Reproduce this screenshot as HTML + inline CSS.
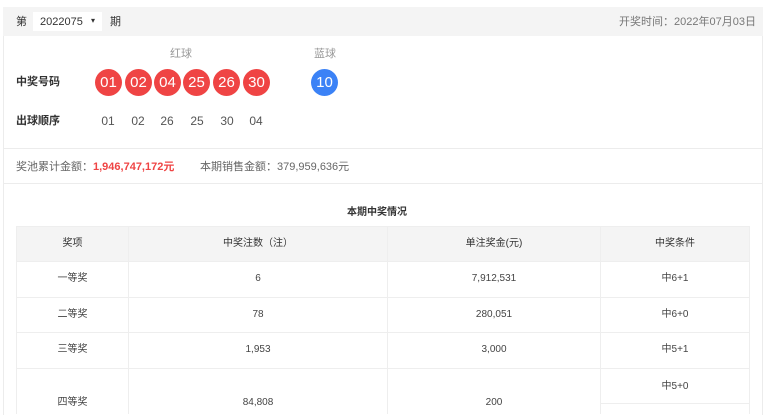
<!DOCTYPE html>
<html><head><meta charset="utf-8"><style>
*{margin:0;padding:0;box-sizing:border-box}
html,body{width:780px;height:415px;overflow:hidden}
body{background:#fff;font-family:"Liberation Sans","Noto Sans CJK SC",sans-serif;font-size:11px;color:#333;position:relative}
.a{position:absolute;white-space:nowrap;line-height:14px}
.card{position:absolute;left:3px;top:7px;width:760px;height:408px;border:1px solid #ececec;border-top:none;border-bottom:none}
.top{position:absolute;left:3px;top:7px;width:760px;height:29px;background:#f4f4f4}
.sel{position:absolute;left:33px;top:12px;width:69px;height:19px;background:#fff}
.ball{position:absolute;width:27px;height:27px;border-radius:50%;background:#ef4444;color:#fff;font-size:15px;line-height:27px;text-align:center;top:69px}
.seq{position:absolute;top:114px;width:30px;text-align:center;font-size:12px;color:#555}
.hr{position:absolute;left:3px;width:760px;height:1px;background:#ececec}
table{position:absolute;left:16px;top:226px;width:734px;border-collapse:collapse;font-size:10px;color:#444;table-layout:fixed}
td,th{border:1px solid #eeeeee;text-align:center;font-weight:normal;vertical-align:middle;line-height:14px;padding:0}
th{background:#f4f4f4;height:35px;color:#333}
td{height:35.5px}
tr.last td{height:46px;border-bottom:none;vertical-align:bottom;padding-bottom:4px}
tr.last td.c4{vertical-align:top;padding:0}
.c4 div{height:35px;line-height:35px;border-bottom:1px solid #eee}
</style></head><body>
<div class="card"></div>
<div class="top"></div>
<div class="a" style="left:16px;top:15px">第</div>
<div class="sel"></div>
<div class="a" style="left:40px;top:15px">2022075</div>
<div class="a" style="left:91px;top:14px;font-size:8px">▾</div>
<div class="a" style="left:110px;top:15px">期</div>
<div class="a" style="left:619px;top:15px;color:#777">开奖时间：2022年07月03日</div>
<div class="a" style="left:170px;top:47px;color:#999">红球</div>
<div class="a" style="left:314px;top:47px;color:#999">蓝球</div>
<div class="a" style="left:16px;top:75px;font-weight:bold">中奖号码</div>
<div class="ball" style="left:95px">01</div>
<div class="ball" style="left:125px">02</div>
<div class="ball" style="left:154px">04</div>
<div class="ball" style="left:183px">25</div>
<div class="ball" style="left:213px">26</div>
<div class="ball" style="left:243px">30</div>
<div class="ball" style="left:311px;background:#3b82f6">10</div>
<div class="a" style="left:16px;top:114px;font-weight:bold">出球顺序</div>
<div class="seq" style="left:93px">01</div>
<div class="seq" style="left:123px">02</div>
<div class="seq" style="left:152px">26</div>
<div class="seq" style="left:182px">25</div>
<div class="seq" style="left:212px">30</div>
<div class="seq" style="left:241px">04</div>
<div class="hr" style="top:148px"></div>
<div class="a" style="left:16px;top:160px;color:#666">奖池累计金额：<b style="color:#ef4444">1,946,747,172元</b></div>
<div class="a" style="left:200px;top:160px;color:#666">本期销售金额：379,959,636元</div>
<div class="hr" style="top:183px"></div>
<div class="a" style="left:347px;top:206px;font-weight:bold;font-size:10px">本期中奖情况</div>
<table>
<colgroup><col style="width:112px"><col style="width:259px"><col style="width:213px"><col></colgroup>
<tr><th>奖项</th><th>中奖注数（注）</th><th>单注奖金(元)</th><th>中奖条件</th></tr>
<tr><td>一等奖</td><td>6</td><td>7,912,531</td><td>中6+1</td></tr>
<tr><td>二等奖</td><td>78</td><td>280,051</td><td>中6+0</td></tr>
<tr><td>三等奖</td><td>1,953</td><td>3,000</td><td>中5+1</td></tr>
<tr class="last"><td>四等奖</td><td>84,808</td><td>200</td><td class="c4"><div>中5+0</div></td></tr>
</table>
</body></html>
